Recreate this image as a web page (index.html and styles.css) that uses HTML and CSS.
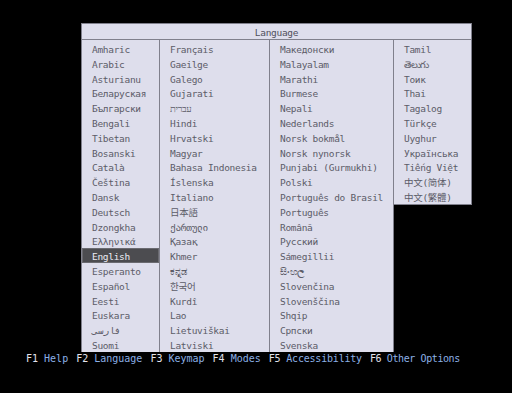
FILE: index.html
```html
<!DOCTYPE html>
<html>
<head>
<meta charset="utf-8">
<link rel="stylesheet" href="styles.css">
</head>
<body>
<div class="screen">
  <div class="menu">
    <div class="title">Language</div>
    <div class="cols">
      <ul class="col c1">
        <li>Amharic</li><li>Arabic</li><li>Asturianu</li><li>Беларуская</li><li>Български</li><li>Bengali</li><li>Tibetan</li><li>Bosanski</li><li>Català</li><li>Čeština</li><li>Dansk</li><li>Deutsch</li><li>Dzongkha</li><li>Ελληνικά</li><li class="sel">English</li><li>Esperanto</li><li>Español</li><li>Eesti</li><li>Euskara</li><li>فارسی</li><li>Suomi</li>
      </ul>
      <ul class="col c2">
        <li>Français</li><li>Gaeilge</li><li>Galego</li><li>Gujarati</li><li>עברית</li><li>Hindi</li><li>Hrvatski</li><li>Magyar</li><li>Bahasa Indonesia</li><li>Íslenska</li><li>Italiano</li><li>日本語</li><li>ქართული</li><li>Қазақ</li><li>Khmer</li><li>ಕನ್ನಡ</li><li>한국어</li><li>Kurdî</li><li>Lao</li><li>Lietuviškai</li><li>Latviski</li>
      </ul>
      <ul class="col c3">
        <li>Македонски</li><li>Malayalam</li><li>Marathi</li><li>Burmese</li><li>Nepali</li><li>Nederlands</li><li>Norsk bokmål</li><li>Norsk nynorsk</li><li>Punjabi (Gurmukhi)</li><li>Polski</li><li>Português do Brasil</li><li>Português</li><li>Română</li><li>Русский</li><li>Sámegillii</li><li>සිංහල</li><li>Slovenčina</li><li>Slovenščina</li><li>Shqip</li><li>Српски</li><li>Svenska</li>
      </ul>
      <ul class="col c4">
        <li>Tamil</li><li>తెలుగు</li><li>Тоик</li><li>Thai</li><li>Tagalog</li><li>Türkçe</li><li>Uyghur</li><li>Українська</li><li>Tiếng Việt</li><li>中文(简体)</li><li>中文(繁體)</li>
      </ul>
    </div>
  </div>
  <div class="footer">
    <span class="fk"><b>F1</b> Help</span>
    <span class="fk"><b>F2</b> Language</span>
    <span class="fk"><b>F3</b> Keymap</span>
    <span class="fk"><b>F4</b> Modes</span>
    <span class="fk narrow"><b>F5</b> Accessibility</span>
    <span class="fk narrower"><b>F6</b> Other Options</span>
  </div>
</div>
</body>
</html>
```
FILE: styles.css
```css
html, body {
  margin: 0;
  padding: 0;
  background: #000;
}
.screen {
  width: 512px;
  height: 393px;
  overflow: hidden;
  font-family: "DejaVu Sans Mono", "Noto Sans CJK SC", monospace;
}
.menu {
  margin: 23px 0 0 81px;
  width: 391px;
}
.title {
  background: #dedeec;
  border: 1px solid #80808c;
  height: 15px;
  line-height: 17px;
  text-align: center;
  font-size: 9.5px;
  letter-spacing: -0.3px;
  color: #50505c;
}
.cols {
  display: flex;
  align-items: flex-start;
}
.col {
  list-style: none;
  margin: 0;
  padding: 1px 0 0;
  background: #dedeec;
  border-right: 1px solid #80808c;
}
.c1 {
  border-left: 1px solid #80808c;
  width: 77px;
}
.c2 { width: 109px; }
.c3 { width: 123px; }
.c4 {
  width: 77px;
  border-bottom: 1px solid #80808c;
}
.col li {
  height: 14.8px;
  line-height: 17px;
  padding-left: 10px;
  font-size: 9.5px;
  letter-spacing: -0.3px;
  color: #5c5c68;
  white-space: nowrap;
  overflow: hidden;
}
.col li.sel {
  background: #4c4c50;
  color: #ececf4;
  box-shadow: inset 0 0 0 1px #6a6a70;
}
.footer {
  display: flex;
  gap: 8px;
  padding-left: 26px;
  height: 14px;
  line-height: 13px;
  font-size: 10px;
  color: #8cb0e6;
  white-space: nowrap;
}
.fk b {
  font-weight: normal;
  color: #e4e4ec;
}
.narrow {
  letter-spacing: -0.2px;
}
.narrower {
  letter-spacing: -0.4px;
}
```
